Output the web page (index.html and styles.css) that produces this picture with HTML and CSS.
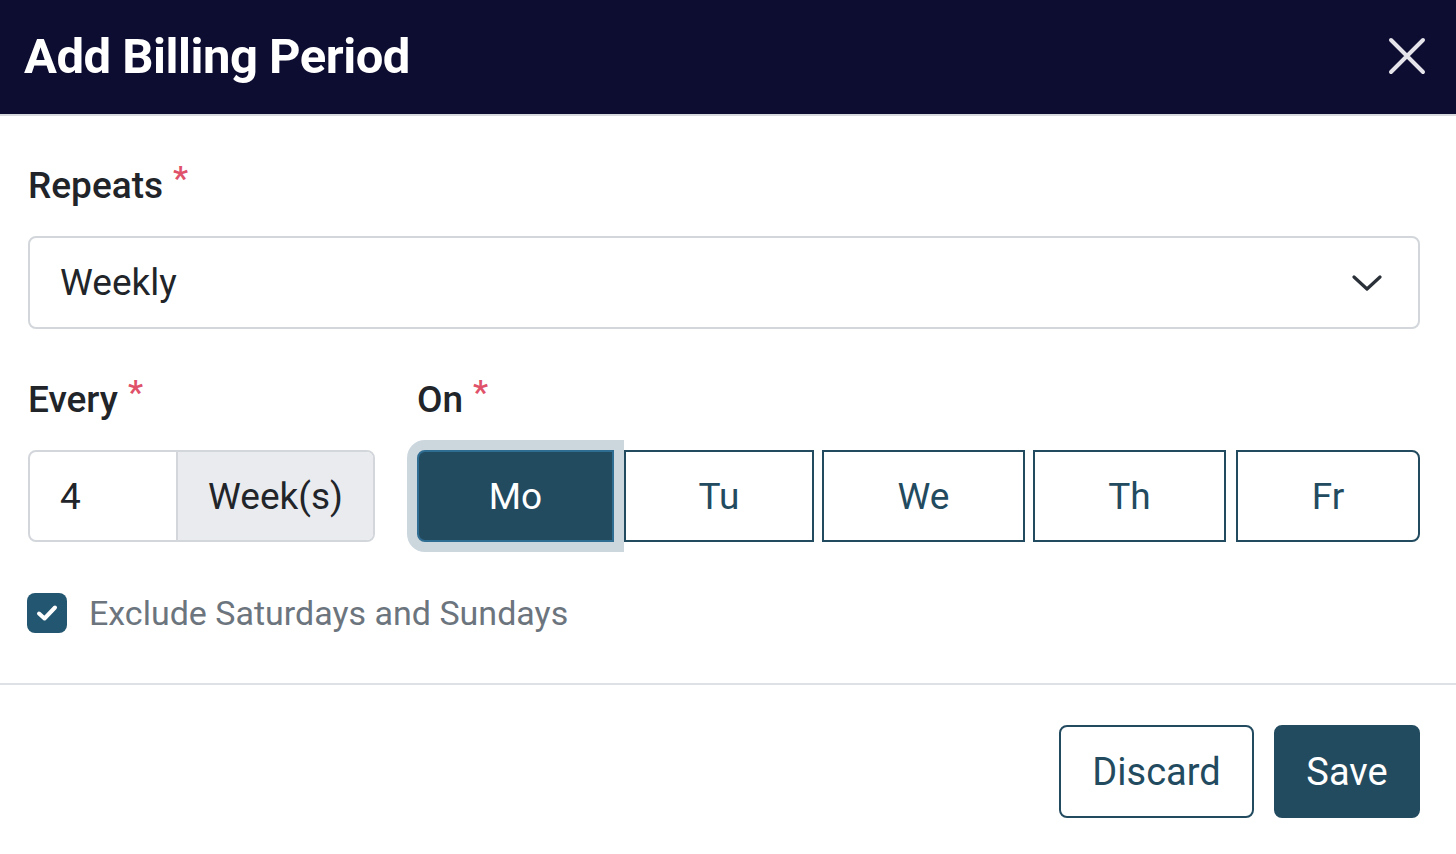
FILE: index.html
```html
<!DOCTYPE html>
<html lang="en">
<head>
<meta charset="utf-8">
<title>Add Billing Period</title>
<link rel="stylesheet" href="styles.css">
</head>
<body>
<div class="modal">
  <header class="modal-header">
    <h1 class="modal-title">Add Billing Period</h1>
    <button class="close-btn" aria-label="Close">
      <svg width="38" height="38" viewBox="0 0 38 38"><path d="M3 3 L35 35 M35 3 L3 35" stroke="#e4e4ea" stroke-width="4" stroke-linecap="round"/></svg>
    </button>
  </header>
  <main class="modal-body">
    <div class="field">
      <label class="label">Repeats <span class="req">*</span></label>
      <div class="select">
        <span class="select-value">Weekly</span>
        <svg class="chevron" width="30" height="18" viewBox="0 0 30 18"><path d="M2 3 L15 15 L28 3" fill="none" stroke="#2b3138" stroke-width="3.2" stroke-linecap="round" stroke-linejoin="round"/></svg>
      </div>
    </div>
    <div class="row">
      <div class="col-every">
        <label class="label">Every <span class="req">*</span></label>
        <div class="input-group">
          <span class="ig-input">4</span>
          <span class="ig-addon">Week(s)</span>
        </div>
      </div>
      <div class="col-on">
        <label class="label">On <span class="req">*</span></label>
        <div class="days">
          <button class="day day-mo active">Mo</button>
          <button class="day day-tu">Tu</button>
          <button class="day day-we">We</button>
          <button class="day day-th">Th</button>
          <button class="day day-fr">Fr</button>
        </div>
      </div>
    </div>
    <div class="check-row">
      <span class="checkbox">
        <svg width="24" height="20" viewBox="0 0 24 20"><path d="M4 10.5 L9.5 15.5 L20 4.5" fill="none" stroke="#fff" stroke-width="4" stroke-linecap="round" stroke-linejoin="round"/></svg>
      </span>
      <span class="check-label">Exclude Saturdays and Sundays</span>
    </div>
  </main>
  <footer class="modal-footer">
    <button class="btn btn-outline">Discard</button>
    <button class="btn btn-primary">Save</button>
  </footer>
</div>
</body>
</html>
```
FILE: styles.css
```css
* { box-sizing: border-box; }
html, body { margin: 0; padding: 0; background: #fff; }
body { font-family: Roboto, "Liberation Sans", sans-serif; color: #212529; }

.modal { width: 1456px; height: 854px; display: flex; flex-direction: column; }

.modal-header {
  height: 116px;
  background: #0d0c31;
  border-bottom: 2px solid #d8d9dc;
  display: flex;
  align-items: center;
  justify-content: space-between;
  padding: 0 30px 2px 24px;
}
.modal-title {
  margin: 0;
  color: #fff;
  font-size: 49px;
  font-weight: 700;
  letter-spacing: -0.5px;
  line-height: 1;
}
.close-btn {
  background: none; border: 0; padding: 0; margin: 0;
  display: flex; cursor: pointer;
}

.modal-body { padding: 47px 36px 0 28px; }

.label {
  display: flex;
  align-items: center;
  height: 44px;
  font-size: 37px;
  font-weight: 500;
  color: #212529;
  margin-bottom: 29px;
}
.req {
  color: #e0526a;
  font-size: 34px;
  line-height: 1;
  position: relative;
  top: -7px;
  margin-left: 10px;
}

.select {
  height: 93px;
  border: 2px solid #d3d7db;
  border-radius: 8px;
  display: flex;
  align-items: center;
  justify-content: space-between;
  padding: 0 36px 0 30px;
}
.select-value { font-size: 37px; color: #212529; }

.row { display: flex; margin-top: 48px; }
.col-every { width: 347px; }
.col-on { margin-left: 42px; flex: 1; }

.input-group {
  display: flex;
  height: 92px;
  border: 2px solid #d3d7db;
  border-radius: 8px;
  overflow: hidden;
}
.ig-input {
  width: 148px;
  display: flex; align-items: center;
  padding-left: 30px;
  font-size: 37px;
  border-right: 2px solid #d3d7db;
}
.ig-addon {
  flex: 1;
  background: #e9ebef;
  display: flex; align-items: center; justify-content: center;
  font-size: 37px;
}

.days { display: flex; height: 92px; }
.day {
  font-family: Roboto, "Liberation Sans", sans-serif;
  font-size: 37px;
  background: #fff;
  color: #234b60;
  border: 2px solid #234b60;
  border-radius: 0;
  padding: 0;
  margin: 0 0 0 8px;
  position: relative;
}
.day-mo { width: 197px; margin-left: 0; border-radius: 8px 0 0 8px; }
.day-tu { width: 190px; margin-left: 10px; }
.day-we { width: 203px; }
.day-th { width: 193px; }
.day-fr { width: 184px; margin-left: 10px; border-radius: 0 8px 8px 0; }
.day.active {
  background: #234b60;
  color: #fff;
  border-color: #2f6d92;
  box-shadow: 0 0 0 10px #cbd6dd;
}

.check-row { display: flex; align-items: center; margin-top: 51px; height: 40px; }
.checkbox {
  width: 40px; height: 40px;
  border-radius: 8px;
  background: #235670;
  display: flex; align-items: center; justify-content: center;
  margin-left: -1px;
}
.check-label { margin-left: 22px; font-size: 34px; color: #6c757d; }

.modal-footer {
  margin-top: 50px;
  border-top: 2px solid #dee2e6;
  display: flex;
  justify-content: flex-end;
  gap: 20px;
  padding: 40px 36px 0 0;
}
.btn {
  height: 93px;
  font-family: Roboto, "Liberation Sans", sans-serif;
  font-size: 38px;
  border-radius: 8px;
  border: 2px solid #234b60;
  padding: 0;
  cursor: pointer;
}
.btn-outline { width: 195px; background: #fff; color: #234b60; }
.btn-primary { width: 146px; background: #234b60; color: #fff; }
```
